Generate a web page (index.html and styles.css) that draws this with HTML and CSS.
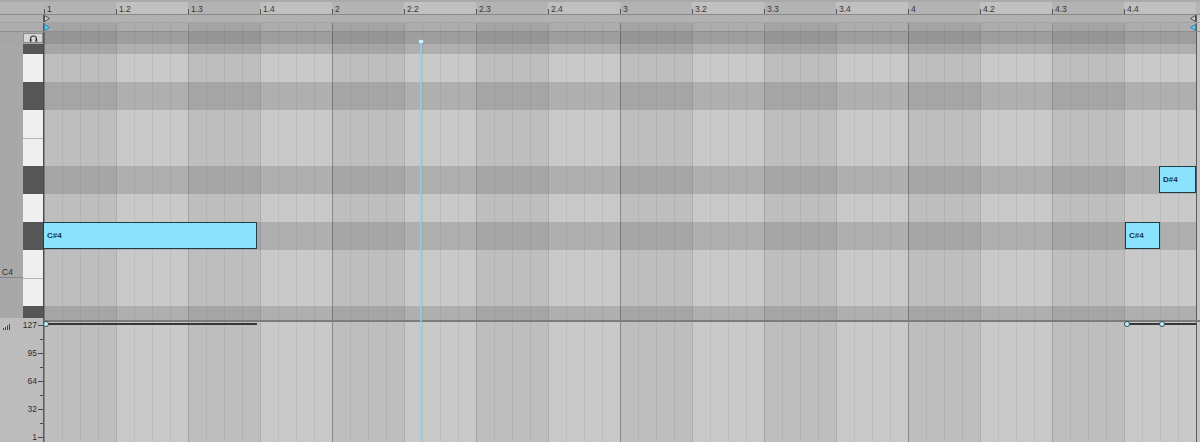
FILE: index.html
```html
<!DOCTYPE html>
<html lang="en">
<head>
  <meta charset="UTF-8">
  <title>MIDI Note Editor</title>
  <link rel="stylesheet" href="styles.css">
</head>
<body>

  <div class="editor">

    <!-- Beat ruler -->
    <div class="ruler">
      <div class="ruler-gutter"></div>
      <div class="ruler-track">
        <span class="beat">1</span><span class="beat">1.2</span><span class="beat">1.3</span><span class="beat">1.4</span>
        <span class="beat">2</span><span class="beat">2.2</span><span class="beat">2.3</span><span class="beat">2.4</span>
        <span class="beat">3</span><span class="beat">3.2</span><span class="beat">3.3</span><span class="beat">3.4</span>
        <span class="beat">4</span><span class="beat">4.2</span><span class="beat">4.3</span><span class="beat">4.4</span>
      </div>
    </div>

    <!-- Start / end markers -->
    <div class="marker-row">
      <div class="gutter"></div>
      <div class="marker-track">
        <svg width="6" height="7" viewBox="0 0 6 7"><polygon points="0.5,0.5 5.5,3.5 0.5,6.5" fill="#cfcfcf" stroke="#4a4a4a"/></svg>
        <svg width="6" height="7" viewBox="0 0 6 7"><polygon points="5.5,0.5 0.5,3.5 5.5,6.5" fill="#cfcfcf" stroke="#4a4a4a"/></svg>
      </div>
      <div class="edge"></div>
    </div>

    <!-- Loop brace -->
    <div class="marker-row loop-row">
      <div class="gutter"></div>
      <div class="marker-track lanes">
        <svg width="6" height="7" viewBox="0 0 6 7"><polygon points="0.5,0.5 5.5,3.5 0.5,6.5" fill="#63cdf2" stroke="#2f86a8"/></svg>
        <svg width="6" height="7" viewBox="0 0 6 7"><polygon points="5.5,0.5 0.5,3.5 5.5,6.5" fill="#63cdf2" stroke="#2f86a8"/></svg>
      </div>
      <div class="edge"></div>
    </div>

    <!-- Header band with preview button -->
    <div class="band">
      <div class="gutter band-gutter">
        <button class="preview-btn">
          <svg width="9" height="7" viewBox="0 0 9 7">
            <path d="M1.5 5.5 V4 a3 3 0 0 1 6 0 V5.5" fill="none" stroke="#333" stroke-width="1.1"/>
            <rect x="0.8" y="4.2" width="1.8" height="2.5" fill="#333"/>
            <rect x="6.4" y="4.2" width="1.8" height="2.5" fill="#333"/>
          </svg>
        </button>
      </div>
      <div class="band-track lanes"></div>
      <div class="edge"></div>
    </div>

    <!-- Piano roll -->
    <div class="roll">
      <div class="sidebar">
        <div class="octave-label">C4</div>
      </div>
      <div class="keys">
        <div class="key black top"></div>
        <div class="key"></div>
        <div class="key black"></div>
        <div class="key"></div>
        <div class="key split"></div>
        <div class="key black"></div>
        <div class="key"></div>
        <div class="key black"></div>
        <div class="key"></div>
        <div class="key split"></div>
        <div class="key black bottom"></div>
      </div>
      <div class="grid lanes">
        <div class="row black top"></div>
        <div class="row"></div>
        <div class="row black"></div>
        <div class="row"></div>
        <div class="row"></div>
        <div class="row black"></div>
        <div class="row"></div>
        <div class="row black"></div>
        <div class="row"></div>
        <div class="row"></div>
        <div class="row black bottom"></div>

        <div class="note" style="left:-1px; top:178px; width:214px;">C#4</div>
        <div class="note" style="left:1081px; top:178px; width:35px;">C#4</div>
        <div class="note" style="left:1115px; top:122px; width:37px;">D#4</div>
      </div>
      <div class="edge"></div>
    </div>

    <!-- Velocity lane -->
    <div class="velocity">
      <div class="vel-scale">
        <div class="vel-step major">
          <svg class="vel-icon" width="7" height="6" viewBox="0 0 7 6">
            <rect x="0" y="4" width="1" height="2" fill="#444"/>
            <rect x="2" y="3" width="1" height="3" fill="#444"/>
            <rect x="4" y="1.5" width="1" height="4.5" fill="#444"/>
            <rect x="6" y="0" width="1" height="6" fill="#444"/>
          </svg>
          <span>127</span><i></i>
        </div>
        <div class="vel-step"><i></i></div>
        <div class="vel-step major"><span>95</span><i></i></div>
        <div class="vel-step"><i></i></div>
        <div class="vel-step major"><span>64</span><i></i></div>
        <div class="vel-step"><i></i></div>
        <div class="vel-step major"><span>32</span><i></i></div>
        <div class="vel-step"><i></i></div>
        <div class="vel-step major"><span>1</span><i></i></div>
      </div>
      <div class="vel-lane lanes">
        <div class="vel-line" style="left:2px; width:211px;"></div>
        <div class="vel-dot" style="left:-1px;"></div>
        <div class="vel-line" style="left:1083px; width:69px;"></div>
        <div class="vel-dot" style="left:1080px;"></div>
        <div class="vel-dot" style="left:1115px;"></div>
      </div>
      <div class="edge"></div>
    </div>

    <div class="playhead"></div>
  </div>

</body>
</html>
```

FILE: styles.css
```css
* {
  box-sizing: border-box;
}

body {
  margin: 0;
  background-color: #bdbdbd;
  font-family: 'Liberation Sans', Arial, sans-serif;
}

.editor {
  position: relative;
  width: 1200px;
  height: 442px;
  overflow: hidden;
  display: flex;
  flex-direction: column;
  background-color: #bdbdbd;
}

/* shared column pieces */
.gutter {
  width: 44px;
  flex: none;
  border-right: 1px solid #5c5c5c;
}

.edge {
  width: 4px;
  flex: none;
  border-left: 1px solid #5a5a5a;
  background-color: #c4c4c4;
}

/* grid lines: bars, beats, sixteenths, alternating beat shade */
.lanes {
  background-image:
    repeating-linear-gradient(to right, rgba(0, 0, 0, 0.17) 0 1px, transparent 1px 288px),
    repeating-linear-gradient(to right, rgba(0, 0, 0, 0.08) 0 1px, transparent 1px 72px),
    repeating-linear-gradient(to right, rgba(0, 0, 0, 0.06) 0 1px, transparent 1px 18px),
    repeating-linear-gradient(to right, rgba(0, 0, 0, 0.055) 0 72px, transparent 72px 144px);
}

/* ruler */
.ruler {
  display: flex;
  height: 15px;
  flex: none;
  border-top: 2px solid #aaaaaa;
  border-bottom: 1px solid #8a8a8a;
  background-color: #b5b5b5;
}

.ruler-gutter {
  width: 44px;
  flex: none;
}

.ruler-track {
  display: flex;
  width: 1152px;
  background: repeating-linear-gradient(to right, #b3b3b3 0 72px, #c0c0c0 72px 144px);
}

.beat {
  width: 72px;
  flex: none;
  display: flex;
  align-items: flex-end;
  padding-left: 3px;
  font-size: 8.5px;
  line-height: 10px;
  color: #363636;
  background: linear-gradient(#555, #555) left bottom / 1px 5px no-repeat;
}

/* marker rows */
.marker-row {
  display: flex;
  height: 8px;
  flex: none;
  background-color: #b1b1b1;
  border-bottom: 1px solid #a4a4a4;
}

.loop-row {
  border-bottom: none;
  background-color: #adadad;
}

.marker-track {
  width: 1152px;
  display: flex;
  justify-content: space-between;
  align-items: center;
}

.marker-track svg {
  display: block;
}

/* header band */
.band {
  display: flex;
  height: 13px;
  flex: none;
  border-top: 1px solid #8e8e8e;
  background-color: #9e9e9e;
}

.band-gutter {
  display: flex;
  justify-content: flex-end;
  align-items: flex-start;
  padding-top: 1px;
  background-color: #a6a6a6;
}

.band-track {
  width: 1152px;
  background-color: #9e9e9e;
}

.preview-btn {
  width: 20px;
  height: 10px;
  padding: 0;
  margin: 0;
  border: 1px solid #8a8a8a;
  background-color: #d6d6d6;
  display: flex;
  justify-content: center;
  align-items: center;
}

.preview-btn svg {
  display: block;
}

/* piano roll */
.roll {
  display: flex;
  height: 276px;
  flex: none;
}

.sidebar {
  width: 23px;
  flex: none;
  display: flex;
  flex-direction: column;
  justify-content: flex-end;
  padding-bottom: 42px;
  background-color: #a8a8a8;
}

.octave-label {
  height: 28px;
  display: flex;
  align-items: flex-end;
  padding-left: 2px;
  border-bottom: 1px solid #858585;
  font-size: 8.5px;
  line-height: 10px;
  color: #2e2e2e;
}

.keys {
  width: 21px;
  flex: none;
  display: flex;
  flex-direction: column;
  border-right: 1px solid #4c4c4c;
}

.key {
  height: 28px;
  flex: none;
  background-color: #efefef;
}

.key.black {
  background-color: #565656;
}

.key.split {
  border-top: 1px solid #b4b4b4;
}

.top {
  height: 10px;
}

.bottom {
  height: 14px;
}

.grid {
  position: relative;
  width: 1152px;
  flex: none;
  display: flex;
  flex-direction: column;
  background-color: #c9c9c9;
}

.row {
  height: 28px;
  flex: none;
}

.row.black {
  background-color: rgba(0, 0, 0, 0.125);
}

.row.top {
  height: 10px;
}

.row.bottom {
  height: 14px;
}

.note {
  position: absolute;
  height: 27px;
  display: flex;
  align-items: center;
  padding-left: 3px;
  border: 1px solid #263a44;
  background-color: #8be2fc;
  color: #1a3444;
  font-size: 8px;
  font-weight: bold;
}

/* velocity lane */
.velocity {
  display: flex;
  height: 122px;
  flex: none;
  border-top: 2px solid #7c7c7c;
}

.vel-scale {
  width: 44px;
  flex: none;
  border-right: 1px solid #5c5c5c;
  background-color: #bcbcbc;
  display: flex;
  flex-direction: column;
  margin-top: -4px;
}

.vel-step {
  height: 14px;
  flex: none;
  display: flex;
  justify-content: flex-end;
  align-items: center;
  font-size: 8.5px;
  color: #2e2e2e;
}

.vel-step i {
  width: 3px;
  height: 1px;
  background-color: #4a4a4a;
}

.vel-step.major i {
  width: 5px;
  margin-left: 1px;
}

.vel-icon {
  margin-right: auto;
  margin-left: 3px;
  margin-top: 3px;
}

.vel-lane {
  position: relative;
  width: 1152px;
  flex: none;
  background-color: #c9c9c9;
}

.vel-line {
  position: absolute;
  top: 1px;
  height: 2px;
  background-color: #363636;
}

.vel-dot {
  position: absolute;
  top: -1px;
  width: 6px;
  height: 6px;
  border: 1.5px solid #34525e;
  border-radius: 50%;
  background-color: #c6eefa;
}

/* playhead */
.playhead {
  position: absolute;
  left: 420px;
  top: 40px;
  bottom: 0;
  width: 2px;
  background-color: rgba(140, 205, 235, 0.7);
}

.playhead::before {
  content: "";
  position: absolute;
  left: -1px;
  top: 0;
  width: 4px;
  height: 3px;
  background-color: #c8f3ff;
  box-shadow: 0 0 2px #7fd6f5;
}
```
